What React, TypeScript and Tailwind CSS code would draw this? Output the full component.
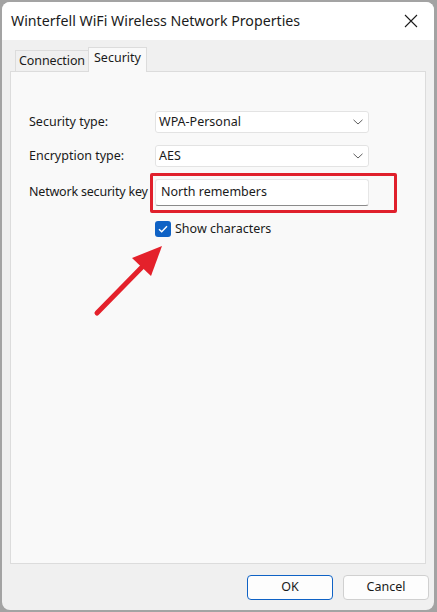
import { useState } from 'react'

const font = { fontFamily: '"Noto Sans", "Open Sans", sans-serif' }

const Chevron = () => (
  <svg width="12" height="8" viewBox="0 0 12 8" className="text-[#5f5f5f]">
    <path d="M1.5 1.8 L6 6 L10.5 1.8" fill="none" stroke="currentColor" strokeWidth="1" />
  </svg>
)

const Combo = ({ value }: { value: string }) => (
  <div className="w-[214px] h-[22px] bg-white border border-[#e3e3e3] rounded-[3px] flex items-center justify-between pl-[3px] pr-[4px]">
    <span>{value}</span>
    <Chevron />
  </div>
)

export default function App() {
  const [show, setShow] = useState(true)

  return (
    <div
      className="w-[437px] h-[612px] bg-[#a3a3a3] pl-[2px] pr-[3px] pt-[2px] pb-[2px] text-[12.5px] text-[#1a1a1a]"
      style={font}
    >
      <div className="h-full rounded-[8px] bg-[#f0f0f0] flex flex-col overflow-hidden">
        {/* title bar */}
        <div className="h-[38px] bg-white flex items-center justify-between pl-[9px] pr-[16px] shrink-0">
          <span className="text-[14.2px] text-[#1b1b1b]">Winterfell WiFi Wireless Network Properties</span>
          <svg width="14" height="14" viewBox="0 0 14 14">
            <path d="M1 1 L13 13 M13 1 L1 13" stroke="#1b1b1b" strokeWidth="1.1" />
          </svg>
        </div>

        <div className="flex-1 flex flex-col px-[8px]">
          {/* tabs */}
          <div className="flex items-end pl-[5px] mt-[7px] h-[24px] relative z-10">
            <div className="h-[21px] px-[3px] pt-[1px] flex items-center border border-b-0 border-[#dcdcdc] bg-[#f0f0f0] -mr-px tracking-[-0.1px]">
              Connection
            </div>
            <div className="h-[25px] px-[5px] flex items-center pb-[3px] border border-b-0 border-[#dcdcdc] bg-[#f9f9f9] mb-[-1px]">
              Security
            </div>
          </div>

          {/* panel */}
          <div className="flex-1 bg-[#f9f9f9] border border-[#dcdcdc] relative pt-[39px] pl-[18px]">
            <div className="flex flex-col gap-[12px]">
              <div className="flex items-center">
                <span className="w-[126px]">Security type:</span>
                <Combo value="WPA-Personal" />
              </div>
              <div className="flex items-center">
                <span className="w-[126px]">Encryption type:</span>
                <Combo value="AES" />
              </div>
              <div className="flex items-center relative">
                <span className="w-[126px] whitespace-nowrap tracking-[-0.2px]">Network security key</span>
                <div className="w-[214px] h-[27px] bg-white border border-[#e6e6e6] border-b-[#8a8a8a] rounded-[3px] flex items-center pl-[5px]">
                  North remembers
                </div>
                <div className="absolute left-[121px] top-[-6px] w-[247px] h-[40px] border-[3px] border-[#e0202c] rounded-[2px] pointer-events-none" />
              </div>
            </div>

            <label className="flex items-center gap-[4px] ml-[126px] mt-[14px] cursor-pointer w-fit" onClick={() => setShow(!show)}>
              <span className="w-[16px] h-[16px] rounded-[3px] bg-[#0f62c5] flex items-center justify-center">
                {show && (
                  <svg width="10" height="8" viewBox="0 0 10 8">
                    <path d="M1 4.2 L3.7 6.8 L9 1.2" fill="none" stroke="white" strokeWidth="1.4" />
                  </svg>
                )}
              </span>
              <span>Show characters</span>
            </label>

            {/* annotation arrow */}
            <svg className="absolute left-[78px] top-[168px] pointer-events-none" width="90" height="80" viewBox="0 0 90 80">
              <path d="M8 73 L58 22" stroke="#e4212b" strokeWidth="5" strokeLinecap="round" />
              <path d="M73 6 L43 18 L62 36 Z" fill="#e4212b" />
            </svg>
          </div>

          {/* buttons */}
          <div className="h-[46px] shrink-0 flex items-center justify-end gap-[10px] -mr-[3px] pt-[1px]">
            <button className="w-[86px] h-[25px] bg-[#fdfdfd] border border-[#0f62c5] rounded-[4px] text-[#1a1a1a]">OK</button>
            <button className="w-[86px] h-[25px] bg-[#fdfdfd] border border-[#d0d0d0] rounded-[4px] text-[#1a1a1a]">Cancel</button>
          </div>
        </div>
      </div>
    </div>
  )
}
